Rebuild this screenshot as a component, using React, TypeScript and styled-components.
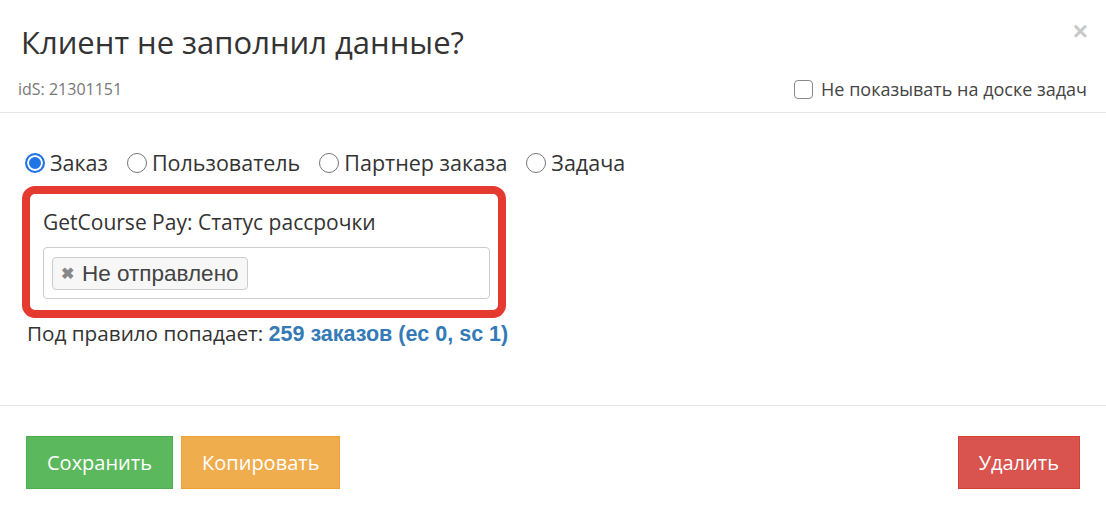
import styled, { createGlobalStyle } from "styled-components";

const Global = createGlobalStyle`
  body {
    margin: 0;
    background: #fff;
    font-family: "Open Sans", "Liberation Sans", sans-serif;
    color: #333;
  }
  * { box-sizing: border-box; }
`;

const S = {
  Modal: styled.div`
    position: relative;
    width: 1106px;
    height: 511px;
    background: #fff;
  `,
  Header: styled.header`
    padding: 23px 19px 11px 18px;
    border-bottom: 1px solid #e5e5e5;
  `,
  Title: styled.h1`
    margin: 0 0 0 3px;
    font-size: 31px;
    font-weight: 400;
    line-height: 38px;
    color: #333;
  `,
  HeaderRow: styled.div`
    display: flex;
    align-items: center;
    justify-content: space-between;
    margin-top: 16px;
  `,
  Ids: styled.span`
    font-size: 16px;
    color: #777;
  `,
  CheckLabel: styled.label`
    display: flex;
    align-items: center;
    gap: 8px;
    font-size: 18px;
    color: #444;
  `,
  CheckBox: styled.span`
    width: 19px;
    height: 19px;
    border: 1.5px solid #888;
    border-radius: 4px;
  `,
  Close: styled.button`
    position: absolute;
    top: 16px;
    right: 18px;
    border: 0;
    background: none;
    padding: 0;
    font-size: 26px;
    font-weight: 700;
    color: #c9c9c9;
    cursor: pointer;
    font-family: "Liberation Sans", sans-serif;
  `,
  Body: styled.section`
    padding: 36px 22px 57px 22px;
    border-bottom: 1px solid #e5e5e5;
  `,
  Radios: styled.div`
    display: flex;
    align-items: center;
    gap: 19px;
    padding-left: 3px;
    font-size: 21.5px;
    line-height: 28px;
  `,
  RadioItem: styled.label`
    display: flex;
    align-items: center;
    gap: 5px;
  `,
  RadioDot: styled.span<{ $on?: boolean }>`
    width: 20px;
    height: 20px;
    border-radius: 50%;
    border: ${(p) => (p.$on ? "2px solid #1f74e6" : "1.5px solid #777")};
    background: ${(p) => (p.$on ? "#1f74e6" : "#fff")};
    box-shadow: ${(p) => (p.$on ? "inset 0 0 0 2px #fff" : "none")};
  `,
  Highlight: styled.div`
    width: 484px;
    margin-top: 9px;
    border: 8px solid #e53a30;
    border-radius: 13px;
    padding: 14px 8px 11px 13px;
  `,
  FieldLabel: styled.div`
    font-size: 21px;
    color: #333;
    line-height: 28px;
  `,
  Select: styled.div`
    margin-top: 11px;
    height: 52px;
    border: 1px solid #ccc;
    border-radius: 4px;
    padding: 9px 8px;
  `,
  Tag: styled.span`
    display: inline-flex;
    align-items: center;
    gap: 8px;
    height: 33px;
    padding: 0 8px;
    border: 1px solid #ccc;
    border-radius: 4px;
    background: #f7f7f7;
    font-family: "Liberation Sans", sans-serif;
    font-size: 22.5px;
    color: #444;
  `,
  TagX: styled.span`
    font-size: 16px;
    font-weight: 700;
    color: #888;
  `,
  Count: styled.div`
    margin-top: 1px;
    padding-left: 5px;
    font-size: 20.7px;
    line-height: 28px;
    color: #333;
  `,
  CountLink: styled.a`
    font-family: "Liberation Sans", sans-serif;
    font-weight: 700;
    font-size: 21.5px;
    color: #337ab7;
    text-decoration: none;
  `,
  Footer: styled.footer`
    display: flex;
    align-items: center;
    padding: 30px 26px 0 26px;
  `,
  Button: styled.button<{ $tone: "green" | "orange" | "red" }>`
    height: 53px;
    padding: 0 20px;
    border: 1px solid
      ${(p) => (p.$tone === "green" ? "#4cae4c" : p.$tone === "orange" ? "#eea236" : "#d43f3a")};
    border-radius: 0;
    background: ${(p) =>
      p.$tone === "green" ? "#5cb85c" : p.$tone === "orange" ? "#f0ad4e" : "#d9534f"};
    color: #fff;
    font-family: "Open Sans", sans-serif;
    font-size: 20px;
    cursor: pointer;
    & + & {
      margin-left: 8px;
    }
  `,
  Spacer: styled.div`
    flex: 1;
  `,
};

const radios = ["Заказ", "Пользователь", "Партнер заказа", "Задача"];

export default function App() {
  return (
    <>
      <Global />
      <S.Modal>
        <S.Close>×</S.Close>
        <S.Header>
          <S.Title>Клиент не заполнил данные?</S.Title>
          <S.HeaderRow>
            <S.Ids>idS: 21301151</S.Ids>
            <S.CheckLabel>
              <S.CheckBox />
              Не показывать на доске задач
            </S.CheckLabel>
          </S.HeaderRow>
        </S.Header>
        <S.Body>
          <S.Radios>
            {radios.map((r, i) => (
              <S.RadioItem key={r}>
                <S.RadioDot $on={i === 0} />
                {r}
              </S.RadioItem>
            ))}
          </S.Radios>
          <S.Highlight>
            <S.FieldLabel>GetCourse Pay: Статус рассрочки</S.FieldLabel>
            <S.Select>
              <S.Tag>
                <S.TagX>✖</S.TagX>
                Не отправлено
              </S.Tag>
            </S.Select>
          </S.Highlight>
          <S.Count>
            Под правило попадает: <S.CountLink>259 заказов (ec 0, sc 1)</S.CountLink>
          </S.Count>
        </S.Body>
        <S.Footer>
          <S.Button $tone="green">Сохранить</S.Button>
          <S.Button $tone="orange">Копировать</S.Button>
          <S.Spacer />
          <S.Button $tone="red">Удалить</S.Button>
        </S.Footer>
      </S.Modal>
    </>
  );
}
